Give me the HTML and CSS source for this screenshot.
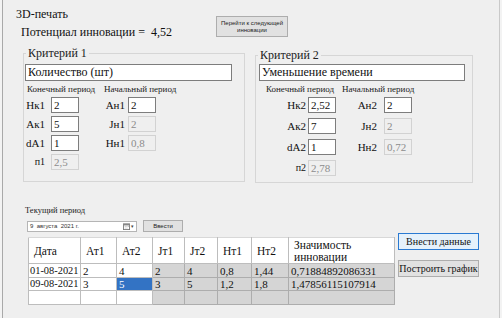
FILE: index.html
```html
<!DOCTYPE html>
<html lang="ru">
<head>
<meta charset="UTF-8" />
<title>3D-печать</title>
<link rel="stylesheet" href="styles.css">
</head>
<body>
<div class="window">
  <div class="top">
    <div class="top-text">
      <div class="app-title">3D-печать</div>
      <div class="potential">Потенциал инновации = &nbsp;4,52</div>
    </div>
    <button class="btn btn-next">Перейти к следующей<br>инновации</button>
  </div>

  <div class="groups">
    <fieldset class="group group-1">
      <legend>Критерий 1</legend>
      <input class="crit-name" type="text" value="Количество (шт)">
      <div class="period-heads">
        <span>Конечный период</span>
        <span>Начальный период</span>
      </div>
      <div class="fields">
        <label>Нк1</label><input type="text" value="2">
        <label>Ан1</label><input type="text" value="2">
        <label>Ак1</label><input type="text" value="5">
        <label>Jн1</label><input type="text" value="2" disabled>
        <label>dA1</label><input type="text" value="1">
        <label>Нн1</label><input type="text" value="0,8" disabled>
        <label class="lbl-n">п1</label><input type="text" value="2,5" disabled>
      </div>
    </fieldset>

    <fieldset class="group group-2">
      <legend>Критерий 2</legend>
      <input class="crit-name" type="text" value="Уменьшение времени">
      <div class="period-heads">
        <span>Конечный период</span>
        <span>Начальный период</span>
      </div>
      <div class="fields">
        <label>Нк2</label><input type="text" value="2,52">
        <label>Ан2</label><input type="text" value="2">
        <label>Ак2</label><input type="text" value="7">
        <label>Jн2</label><input type="text" value="2" disabled>
        <label>dA2</label><input type="text" value="1">
        <label>Нн2</label><input type="text" value="0,72" disabled>
        <label class="lbl-n">п2</label><input type="text" value="2,78" disabled>
      </div>
    </fieldset>
  </div>

  <div class="current">
    <div class="current-left">
      <div class="current-label">Текущий период</div>
      <div class="picker-row">
        <div class="date-box">
          <span>9 &nbsp;августа &nbsp;2021 г.</span>
          <span class="date-btn">
            <svg viewBox="0 0 8 8" width="7" height="7" aria-hidden="true">
              <rect x="0.5" y="1" width="7" height="6.5" fill="#fff" stroke="#777"/>
              <rect x="0.5" y="1" width="7" height="1.8" fill="#888"/>
              <path d="M2 4h1M4 4h1M6 4h1M2 5.8h1M4 5.8h1" stroke="#999" stroke-width="0.8"/>
            </svg>
            <span class="caret">▾</span>
          </span>
        </div>
        <button class="btn btn-enter">Ввести</button>
      </div>
      <table class="data-grid">
        <colgroup>
          <col style="width:52px"><col style="width:36px"><col style="width:36px"><col style="width:32px">
          <col style="width:33px"><col style="width:34px"><col style="width:37px"><col style="width:106px">
        </colgroup>
        <thead>
          <tr>
            <th>Дата</th><th>Ат1</th><th>Ат2</th><th>Jт1</th><th>Jт2</th><th>Нт1</th><th>Нт2</th>
            <th class="th-wide">Значимость инновации</th>
          </tr>
        </thead>
        <tbody>
          <tr>
            <td class="date">01-08-2021</td><td>2</td><td>4</td>
            <td class="ro">2</td><td class="ro">4</td><td class="ro">0,8</td><td class="ro">1,44</td><td class="ro">0,71884892086331</td>
          </tr>
          <tr>
            <td class="date">09-08-2021</td><td>3</td><td class="selected">5</td>
            <td class="ro">3</td><td class="ro">5</td><td class="ro">1,2</td><td class="ro">1,8</td><td class="ro">1,47856115107914</td>
          </tr>
          <tr class="new-row">
            <td></td><td></td><td></td>
            <td class="ro"></td><td class="ro"></td><td class="ro"></td><td class="ro"></td><td class="ro"></td>
          </tr>
        </tbody>
      </table>
    </div>
    <div class="side-buttons">
      <button class="btn btn-side btn-default">Внести данные</button>
      <button class="btn btn-side">Построить график</button>
    </div>
  </div>
</div>
</body>
</html>
```

FILE: styles.css
```css
/* Base */
* {
  box-sizing: border-box;
}
body {
  margin: 0;
  background: #f3f3f3;
  font-family: "Liberation Serif", "Times New Roman", serif;
  color: #111;
}
.window {
  width: 498px;
  height: 318px;
  margin-left: 2px;
  background: #efefef;
  border-left: 1px solid #a9a9a9;
  border-right: 1px solid #c9c9c9;
}

/* Top */
.top {
  display: flex;
  padding: 8px 0 0 13px;
}
.top-text {
  width: 200px;
}
.app-title {
  font-size: 12px;
  line-height: 12px;
}
.potential {
  margin: 5px 0 0 5px;
  font-size: 12px;
  line-height: 14px;
}
.btn {
  margin: 0;
  padding: 0;
  background: #e1e1e1;
  border: 1px solid #adadad;
  color: #222;
  font-family: "Liberation Sans", Arial, sans-serif;
}
.btn-next {
  margin-top: 8px;
  width: 72px;
  height: 21px;
  font-size: 6px;
  line-height: 7px;
}

/* Criteria groups */
.groups {
  display: flex;
  align-items: flex-start;
  gap: 10px;
  margin: 8px 0 0 20px;
}
.group {
  margin: 0;
  padding: 0;
  border: 1px solid #d6d6d6;
  min-width: 0;
}
.group legend {
  margin-left: 2px;
  padding: 0 2px;
  font-size: 12px;
  line-height: 13px;
  color: #222;
}
.group-1 {
  width: 222px;
  height: 135px;
}
.group-2 {
  width: 218px;
  height: 134px;
  margin-top: 2px;
}
.group input {
  display: block;
  margin: 0;
  padding: 0 2px;
  height: 16px;
  border: 1px solid #7d7d7d;
  background: #fff;
  font-family: inherit;
  font-size: 11px;
  color: #111;
}
.group input:disabled {
  background: #efefef;
  border-color: #d2d2d2;
  color: #8c8c8c;
}
.group input.crit-name {
  height: 17px;
  font-size: 12px;
}
.group-1 .crit-name {
  width: 207px;
  margin: 4px 0 0 1px;
}
.group-2 .crit-name {
  width: 206px;
  margin: 2px 0 0 3px;
}
.period-heads {
  display: flex;
  margin-top: 3px;
  font-size: 9px;
  line-height: 11px;
  color: #222;
}
.group-1 .period-heads {
  padding-left: 3px;
}
.group-1 .period-heads span:first-child {
  width: 77px;
}
.group-2 .period-heads {
  padding-left: 10px;
}
.group-2 .period-heads span:first-child {
  width: 76px;
}
.fields {
  display: grid;
  grid-auto-rows: 16px;
  margin-top: 2px;
  align-items: center;
}
.fields label {
  text-align: right;
  font-size: 11px;
  line-height: 16px;
  white-space: nowrap;
}
.fields input {
  width: 28px;
}
.fields .lbl-n {
  font-size: 10px;
}
.group-1 .fields {
  grid-template-columns: 25px 28px 49px 28px;
  row-gap: 3px;
  margin-left: 2px;
}
.group-1 .fields label:nth-of-type(odd) {
  padding-right: 6px;
}
.group-1 .fields label:nth-of-type(even) {
  padding-right: 3px;
}
.group-2 .fields {
  grid-template-columns: 32px 29px 47px 29px;
  row-gap: 5px;
  margin-left: 20px;
}
.group-2 .fields label:nth-of-type(odd) {
  padding-right: 2px;
}
.group-2 .fields label:nth-of-type(even) {
  padding-right: 7px;
}

/* Current period */
.current {
  display: flex;
  align-items: flex-start;
  gap: 3px;
  margin: 22px 0 0 22px;
}
.current-label {
  font-size: 8.5px;
  line-height: 10px;
  color: #222;
}
.picker-row {
  display: flex;
  align-items: center;
  gap: 6px;
  margin-top: 5px;
  height: 12px;
}
.date-box {
  display: flex;
  align-items: center;
  justify-content: space-between;
  width: 110px;
  height: 11px;
  margin-left: 2px;
  padding: 0 2px 0 2px;
  background: #fff;
  border: 1px solid #b5b5b5;
  font-family: "Liberation Sans", Arial, sans-serif;
  font-size: 6px;
  color: #333;
}
.date-btn {
  display: flex;
  align-items: center;
  gap: 1px;
}
.caret {
  font-size: 5px;
  color: #444;
}
.btn-enter {
  width: 40px;
  height: 12px;
  font-size: 6px;
}

/* Data grid */
.data-grid {
  margin: 5px 0 0 3px;
  width: 366px;
  table-layout: fixed;
  border-collapse: collapse;
  font-size: 11px;
  background: #fff;
}
.data-grid th,
.data-grid td {
  border: 1px solid #bdbdbd;
  padding: 0 0 0 2px;
  overflow: hidden;
  white-space: nowrap;
  text-align: left;
  font-weight: normal;
}
.data-grid th {
  height: 26px;
  padding-left: 5px;
  font-size: 11.5px;
  border-top-color: #d8d8d8;
}
.data-grid th.th-wide {
  white-space: normal;
  line-height: 12px;
  padding-right: 20px;
}
.data-grid td {
  height: 14px;
  line-height: 12px;
}
.data-grid td.date {
  padding-left: 1px;
  font-size: 10.4px;
}
.data-grid tr:nth-child(2) td {
  height: 13px;
}
.data-grid td.ro {
  background: #d5d5d5;
  border-color: #adadad;
}
.data-grid td.selected {
  background: #3373c4;
  color: #fff;
}

/* Side buttons */
.side-buttons {
  display: flex;
  flex-direction: column;
  gap: 10px;
  margin-top: 28px;
}
.btn-side {
  width: 81px;
  height: 17px;
  font-family: "Liberation Serif", "Times New Roman", serif;
  font-size: 10px;
  color: #111;
}
.btn-default {
  background: #e5f1fb;
  border-color: #2a7ad2;
}
```
